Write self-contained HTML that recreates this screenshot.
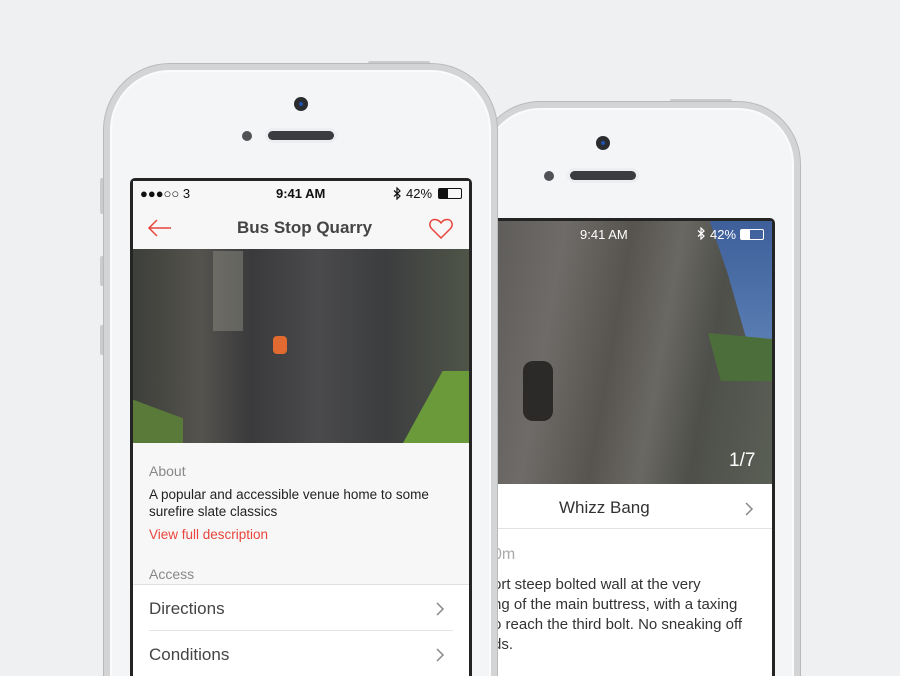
<!DOCTYPE html>
<html style="overflow:hidden;height:676px"><head><meta charset="utf-8"><style>
*{margin:0;padding:0;box-sizing:border-box}
html,body{width:900px;height:676px;overflow:hidden}
body{background:#eef0f1;font-family:"Liberation Sans",sans-serif}
#w{position:relative;width:900px;height:676px;overflow:hidden;background:#eef0f1}
.phone{position:absolute;background:#f4f5f7;border:6px solid #d2d4d6;box-shadow:inset 0 0 0 2px #fbfbfc,0 0 0 1px #b8babc}
.btn{position:absolute;background:#c9cbcd;border-radius:2px}
.cam{position:absolute;width:14px;height:14px;border-radius:50%;background:#2a2c30}
.cam:after{content:"";position:absolute;left:5px;top:5px;width:4px;height:4px;border-radius:50%;background:#2150b0}
.dot{position:absolute;width:10px;height:10px;border-radius:50%;background:#505256}
.spk{position:absolute;height:9px;border-radius:5px;background:#3a3c40;box-shadow:0 0 0 3px #eceef0}
.scr{position:absolute;background:#242424;border-radius:5px 5px 0 0;overflow:hidden}
.in{position:absolute;left:3px;right:3px;top:3px;bottom:0;overflow:hidden}
.t{position:absolute;white-space:nowrap}
</style></head><body><div id="w">
<!-- back phone -->
<div class="btn" style="left:670px;top:99px;width:62px;height:4px"></div>
<div class="phone" style="left:478px;top:102px;width:322px;height:640px;border-radius:62px"></div>
<div class="cam" style="left:596px;top:136px"></div>
<div class="dot" style="left:544px;top:171px"></div>
<div class="spk" style="left:570px;top:171px;width:66px"></div>
<div class="scr" style="left:480px;top:218px;width:295px;height:470px">
 <div class="in" style="background:#fff">
  <div style="position:absolute;left:0;top:0;width:289px;height:263px;background:linear-gradient(100deg,#5c5a58 0%,#6e6b68 25%,#57544f 45%,#6a6862 60%,#4e4f4a 75%,#5a5f55 100%)"></div>
  <div style="position:absolute;left:200px;top:0;width:89px;height:130px;background:linear-gradient(180deg,#3e5f9a,#5b7fb5);clip-path:polygon(30% 0,100% 0,100% 100%,75% 100%,50% 40%)"></div>
  <div style="position:absolute;left:225px;top:100px;width:64px;height:60px;background:#4c6e3a;clip-path:polygon(0 20%,100% 30%,100% 100%,20% 100%)"></div>
  <div style="position:absolute;left:40px;top:140px;width:30px;height:60px;background:#2c2a28;border-radius:10px"></div>
  <div class="t" style="left:97px;top:6px;font-size:13px;color:#fff">9:41 AM</div>
  <svg style="position:absolute;left:214px;top:6px" width="8" height="13" viewBox="0 0 8 13"><path d="M1 3.5l6 5.5-3 3V1l3 3-6 5.5" fill="none" stroke="#fff" stroke-width="1.2"/></svg>
  <div class="t" style="left:227px;top:6px;font-size:13px;color:#fff">42%</div>
  <div style="position:absolute;left:257px;top:8px;width:24px;height:11px;border:1px solid #fff;border-radius:2px"><div style="width:9px;height:100%;background:#fff"></div></div>
  <div class="t" style="left:246px;top:229px;font-size:19px;color:#fff">1/7</div>
  <div style="position:absolute;left:0;top:263px;width:289px;height:45px;border-bottom:1px solid #e2e2e2"></div>
  <div class="t" style="left:76px;top:277px;font-size:17px;color:#333">Whizz Bang</div>
  <svg style="position:absolute;left:262px;top:281px" width="9" height="14" viewBox="0 0 9 14"><path d="M1 1l6 6-6 6" fill="none" stroke="#888" stroke-width="1.5"/></svg>
  <div class="t" style="left:10px;top:325px;font-size:16px;color:#aaa">0m</div>
  <div class="t" style="left:10px;top:354px;font-size:15px;color:#333;line-height:20px">ort steep bolted wall at the very<br>ng of the main buttress, with a taxing<br>o reach the third bolt. No sneaking off<br>ds.</div>
 </div>
</div>
<!-- front phone -->
<div class="btn" style="left:368px;top:61px;width:62px;height:4px"></div>
<div class="btn" style="left:100px;top:178px;width:5px;height:36px"></div>
<div class="btn" style="left:100px;top:256px;width:5px;height:30px"></div>
<div class="btn" style="left:100px;top:325px;width:5px;height:30px"></div>
<div class="phone" style="left:104px;top:64px;width:393px;height:680px;border-radius:66px"></div>
<div class="cam" style="left:294px;top:97px"></div>
<div class="dot" style="left:242px;top:131px"></div>
<div class="spk" style="left:268px;top:131px;width:66px"></div>
<div class="scr" style="left:130px;top:178px;width:342px;height:500px">
 <div class="in" style="background:#f7f7f7">
  <div class="t" style="left:7px;top:5px;font-size:13px;color:#111">●●●○○ 3</div>
  <div class="t" style="left:143px;top:5px;font-size:13px;color:#111;font-weight:bold">9:41 AM</div>
  <svg style="position:absolute;left:260px;top:6px" width="8" height="13" viewBox="0 0 8 13"><path d="M1 3.5l6 5.5-3 3V1l3 3-6 5.5" fill="none" stroke="#111" stroke-width="1.2"/></svg>
  <div class="t" style="left:273px;top:5px;font-size:13px;color:#111">42%</div>
  <div style="position:absolute;left:305px;top:7px;width:24px;height:11px;border:1px solid #111;border-radius:2px"><div style="width:9px;height:100%;background:#111"></div></div>
  <svg style="position:absolute;left:14px;top:38px" width="26" height="18" viewBox="0 0 26 18"><path d="M24 9H2M10 1L2 9l8 8" fill="none" stroke="#e8453c" stroke-width="1.5"/></svg>
  <div class="t" style="left:104px;top:37px;font-size:17px;font-weight:bold;color:#444">Bus Stop Quarry</div>
  <svg style="position:absolute;left:296px;top:37px" width="24" height="21" viewBox="0 0 24 21"><path d="M12 20L2.5 10.5C0 8 0.5 3.5 3.5 2 6 0.8 9.5 1.5 12 5 14.5 1.5 18 0.8 20.5 2 23.5 3.5 24 8 21.5 10.5Z" fill="none" stroke="#e8453c" stroke-width="1.5"/></svg>
  <div style="position:absolute;left:0;top:68px;width:336px;height:194px;background:linear-gradient(90deg,#3d3f3a 0%,#55534e 20%,#3a3a3c 35%,#4a4a4c 55%,#3c3d3f 75%,#4f5548 100%)"></div>
  <div style="position:absolute;left:0;top:200px;width:50px;height:62px;background:#5a7a3a;clip-path:polygon(0 30%,100% 60%,100% 100%,0 100%)"></div>
  <div style="position:absolute;left:270px;top:190px;width:66px;height:72px;background:#6a9a3a;clip-path:polygon(60% 0,100% 0,100% 100%,0 100%)"></div>
  <div style="position:absolute;left:80px;top:70px;width:30px;height:80px;background:#8a8a80;opacity:.5"></div>
  <div style="position:absolute;left:140px;top:155px;width:14px;height:18px;background:#e06a30;border-radius:4px"></div>
  <div class="t" style="left:16px;top:282px;font-size:14px;color:#888">About</div>
  <div class="t" style="left:16px;top:305px;font-size:13.5px;color:#222;line-height:17px">A popular and accessible venue home to some<br>surefire slate classics</div>
  <div class="t" style="left:16px;top:346px;font-size:13.5px;color:#e8453c">View full description</div>
  <div class="t" style="left:16px;top:385px;font-size:14px;color:#888">Access</div>
  <div style="position:absolute;left:0;top:403px;width:336px;height:100px;background:#fff;border-top:1px solid #e0e0e0"></div>
  <div style="position:absolute;left:16px;top:449px;width:304px;height:1px;background:#e4e4e4"></div>
  <div class="t" style="left:16px;top:418px;font-size:17px;color:#444">Directions</div>
  <div class="t" style="left:16px;top:464px;font-size:17px;color:#444">Conditions</div>
  <svg style="position:absolute;left:303px;top:421px" width="9" height="14" viewBox="0 0 9 14"><path d="M1 1l6 6-6 6" fill="none" stroke="#888" stroke-width="1.5"/></svg>
  <svg style="position:absolute;left:303px;top:467px" width="9" height="14" viewBox="0 0 9 14"><path d="M1 1l6 6-6 6" fill="none" stroke="#888" stroke-width="1.5"/></svg>
 </div>
</div>
</div></body></html>
